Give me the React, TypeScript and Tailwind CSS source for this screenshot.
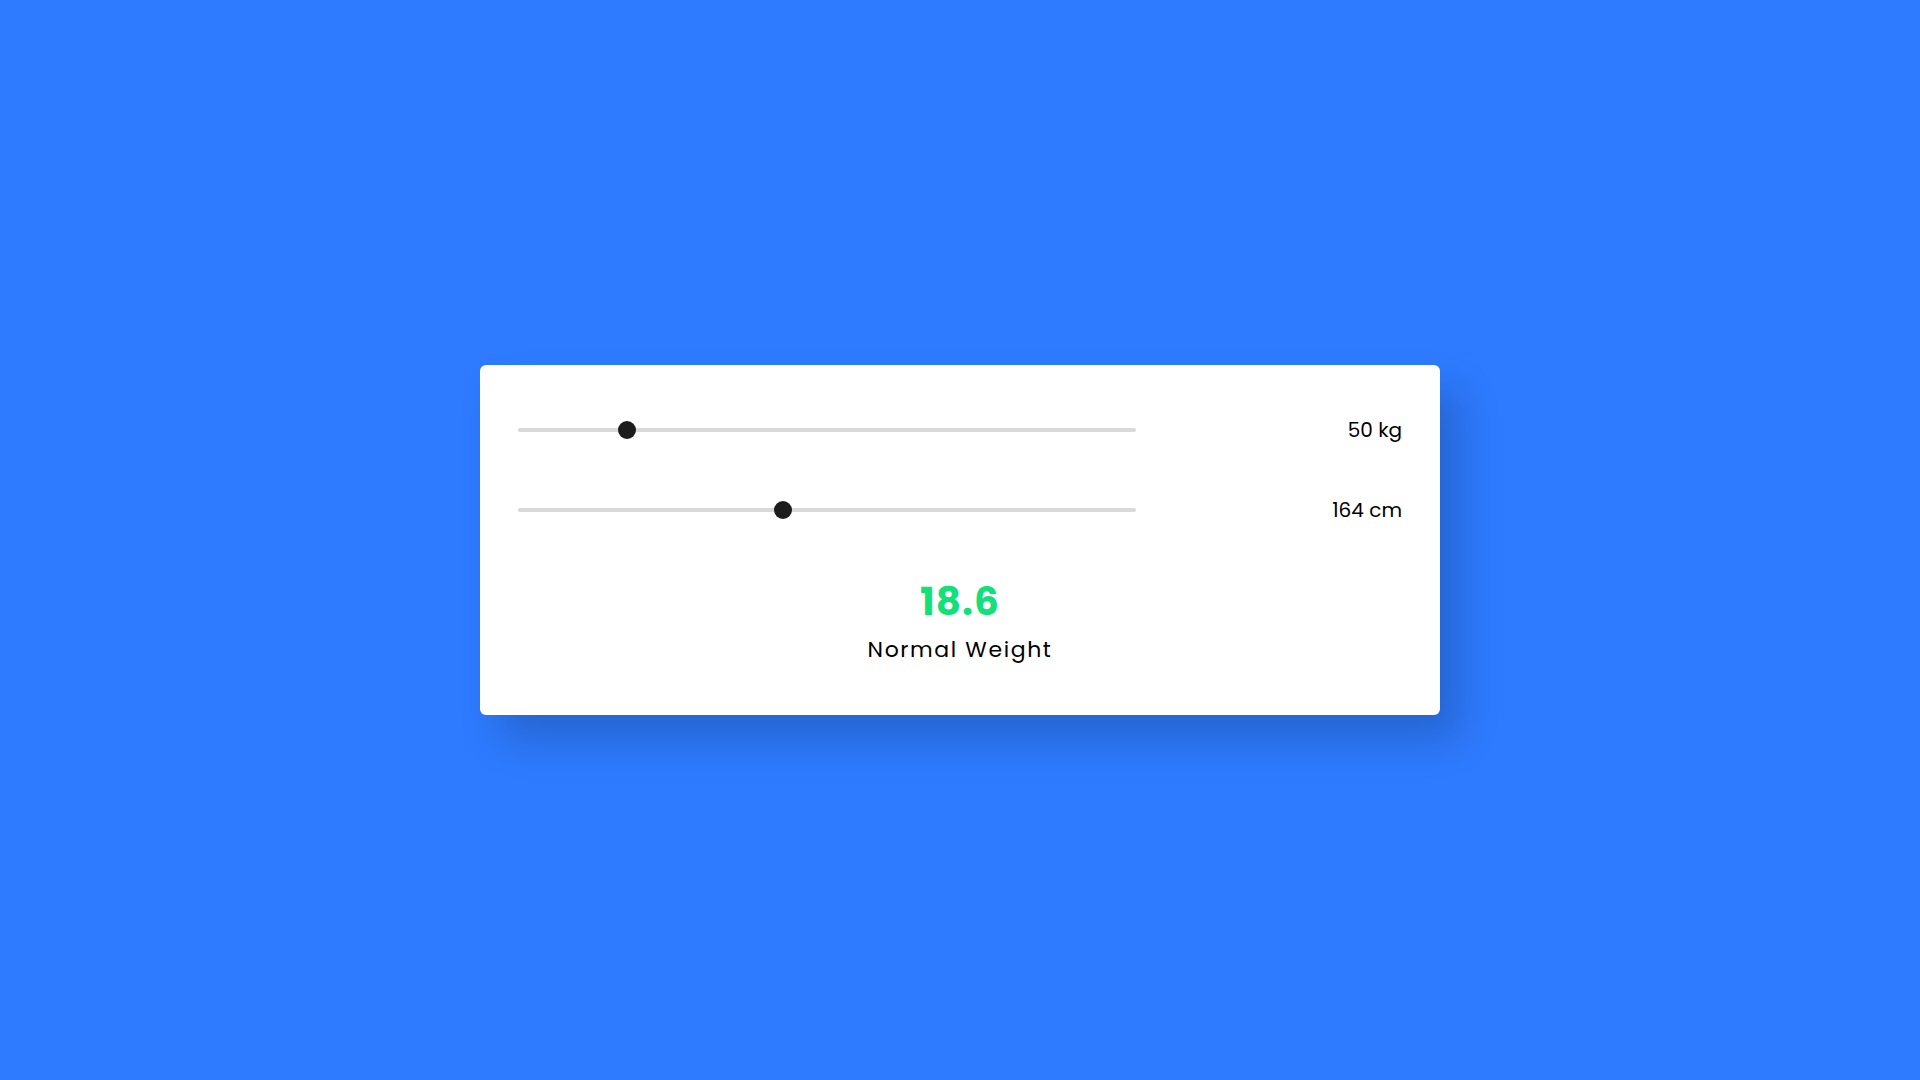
import React, { useState } from 'react';

const getCategory = (bmi: number) => {
  if (bmi < 18.5) return { label: 'Underweight', color: 'text-[#f5b50a]' };
  if (bmi < 25) return { label: 'Normal Weight', color: 'text-[#12e07b]' };
  if (bmi < 30) return { label: 'Overweight', color: 'text-[#ff8a1f]' };
  return { label: 'Obese', color: 'text-[#ff3b3b]' };
};

const sliderClass =
  'w-[618px] h-[4px] appearance-none rounded-full bg-[#d9d9d9] outline-none cursor-pointer ' +
  '[&::-webkit-slider-thumb]:appearance-none [&::-webkit-slider-thumb]:w-[18px] [&::-webkit-slider-thumb]:h-[18px] ' +
  '[&::-webkit-slider-thumb]:rounded-full [&::-webkit-slider-thumb]:bg-[#1c1c1c] [&::-webkit-slider-thumb]:border-0 ' +
  '[&::-moz-range-thumb]:w-[18px] [&::-moz-range-thumb]:h-[18px] [&::-moz-range-thumb]:rounded-full ' +
  '[&::-moz-range-thumb]:bg-[#1c1c1c] [&::-moz-range-thumb]:border-0';

const App = () => {
  const [weight, setWeight] = useState(50);
  const [height, setHeight] = useState(164);

  const bmi = weight / Math.pow(height / 100, 2);
  const category = getCategory(bmi);

  return (
    <div className="min-h-screen w-full bg-[#2e7bff] flex items-center justify-center font-['Poppins','Inter',sans-serif]">
      <div className="w-[960px] h-[350px] bg-white rounded-[6px] shadow-[20px_25px_40px_rgba(0,0,0,0.18)] px-[38px] pt-[45px] flex flex-col">
        <div className="h-[40px] flex items-center justify-between">
          <input
            type="range"
            min={30}
            max={150}
            value={weight}
            onChange={(e) => setWeight(Number(e.target.value))}
            className={sliderClass}
          />
          <span className="text-[20px] text-black">{weight} kg</span>
        </div>
        <div className="h-[40px] mt-[40px] flex items-center justify-between">
          <input
            type="range"
            min={100}
            max={250}
            value={height}
            onChange={(e) => setHeight(Number(e.target.value))}
            className={sliderClass}
          />
          <span className="text-[20px] text-black">{height} cm</span>
        </div>
        <div className="mt-[48px] flex flex-col items-center">
          <div className={`text-[39px] leading-[48px] font-bold tracking-[1px] ${category.color}`}>
            {bmi.toFixed(1)}
          </div>
          <div className="mt-[8px] text-[22px] leading-[32px] tracking-[1.6px] text-black">{category.label}</div>
        </div>
      </div>
    </div>
  );
};

export default App;
